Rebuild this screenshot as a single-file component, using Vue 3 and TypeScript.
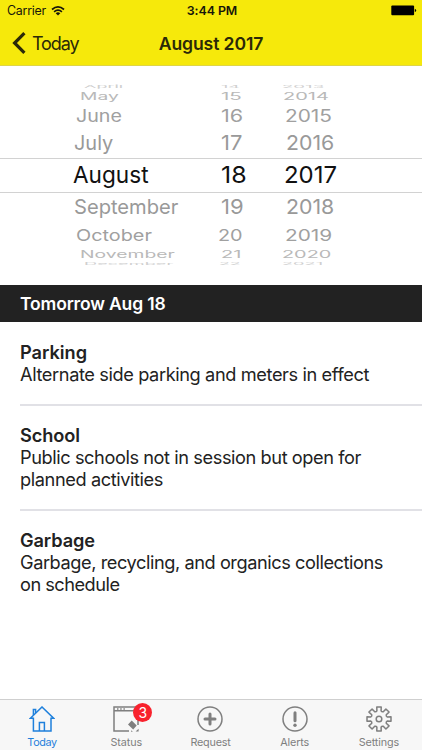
<script setup lang="ts">
interface WheelRow {
  height: number
  squash: number
  color: string
  month: [string, number, number]
  day: [string, number, number]
  year: [string, number, number]
}

interface Line {
  text: string
  width: number
}

interface Notice {
  name: Line
  lines: Line[]
}

// Each wheel cell is [label, left edge, drawn width].
const rows: WheelRow[] = [
  { height: 7, squash: 0.17, color: '#cfcfcf', month: ['April', 84, 39], day: ['14', 221, 19], year: ['2013', 282, 42] },
  { height: 13, squash: 0.43, color: '#b9b9b9', month: ['May', 79.5, 38.5], day: ['15', 220.5, 21], year: ['2014', 282.5, 46] },
  { height: 26, squash: 0.71, color: '#a0a0a0', month: ['June', 76, 46], day: ['16', 220.5, 22], year: ['2015', 284.5, 47] },
  { height: 28.5, squash: 0.86, color: '#999999', month: ['July', 74, 39], day: ['17', 221, 21.5], year: ['2016', 285.5, 48] },
  { height: 35.5, squash: 1, color: '#111111', month: ['August', 73, 76], day: ['18', 220.5, 25.5], year: ['2017', 284, 53] },
  { height: 28, squash: 0.86, color: '#999999', month: ['September', 74, 104.5], day: ['19', 220.5, 22.5], year: ['2018', 285.5, 48] },
  { height: 27, squash: 0.69, color: '#a0a0a0', month: ['October', 76, 76], day: ['20', 218, 24.5], year: ['2019', 284.5, 47] },
  { height: 12, squash: 0.44, color: '#b9b9b9', month: ['November', 79.5, 94.5], day: ['21', 221, 20.5], year: ['2020', 281.5, 49] },
  { height: 7, squash: 0.15, color: '#cfcfcf', month: ['December', 84, 89], day: ['22', 219, 22], year: ['2021', 281.5, 41] },
]

const notices: Notice[] = [
  { name: { text: 'Parking', width: 67 }, lines: [{ text: 'Alternate side parking and meters in effect', width: 349 }] },
  {
    name: { text: 'School', width: 60 },
    lines: [
      { text: 'Public schools not in session but open for', width: 341 },
      { text: 'planned activities', width: 143 },
    ],
  },
  {
    name: { text: 'Garbage', width: 75 },
    lines: [
      { text: 'Garbage, recycling, and organics collections', width: 363 },
      { text: 'on schedule', width: 99.5 },
    ],
  },
]

const tabs = [
  { id: 'today', label: 'Today', width: 29.5 },
  { id: 'status', label: 'Status', width: 31.5 },
  { id: 'request', label: 'Request', width: 40 },
  { id: 'alerts', label: 'Alerts', width: 29 },
  { id: 'settings', label: 'Settings', width: 40.5 },
]

// Tracks a label so that it spans the given number of pixels.
const vTrack = {
  mounted(el: HTMLElement, binding: { value: number }) {
    const count = (el.textContent ?? '').length
    const natural = el.getBoundingClientRect().width
    el.style.letterSpacing = `${(binding.value - natural) / count}px`
  },
}

// Projects a wheel cell to [drawn width, vertical squash].
const vProject = {
  mounted(el: HTMLElement, binding: { value: [number, number] }) {
    const [width, squash] = binding.value
    el.style.transform = `scale(${width / el.offsetWidth}, ${squash})`
  },
}

const teeth = Array.from({ length: 8 }, (_, i) => i * 45)
const gear = teeth
  .map((deg, i) => {
    const at = (r: number, offset: number) => {
      const a = ((deg + offset - 90) * Math.PI) / 180
      return `${(13 + r * Math.cos(a)).toFixed(2)} ${(13 + r * Math.sin(a)).toFixed(2)}`
    }
    return `${i ? 'L' : 'M'}${at(8.4, -14.5)} L${at(12.2, -10.5)} L${at(12.2, 10.5)} L${at(8.4, 14.5)} Q${at(7.4, 22.5)} ${at(8.4, 30.5)}`
  })
  .join(' ') + 'Z'
</script>

<template>
  <main class="screen">
    <header class="top">
      <div class="statusbar">
        <div class="carrier">
          <span v-track="39">Carrier</span>
          <svg class="wifi" viewBox="0 0 14 10" width="14" height="10">
            <path d="M1 3.5Q7-1.6 13 3.5M3.1 5.8Q7 2.5 10.9 5.8" />
            <path class="dot" d="M7 9.5 4.7 7.2Q7 5.3 9.3 7.2Z" />
          </svg>
        </div>
        <span class="clock"><span v-track="50.5">3:44 PM</span></span>
        <svg class="battery" viewBox="0 0 26 11" width="26" height="11">
          <rect x=".3" y=".6" width="22.8" height="9.6" rx="1" />
          <path d="M23.8 3.7q1.4.5 1.4 1.7t-1.4 1.7Z" />
        </svg>
      </div>
      <nav class="navbar">
        <a class="back">
          <svg viewBox="0 0 14 22" width="14" height="22"><path d="M12.4 1.2 2.6 11l9.8 9.8" /></svg>
          <span v-track="46.5">Today</span>
        </a>
        <h1><span v-track="104.5">August 2017</span></h1>
        <span></span>
      </nav>
    </header>

    <section class="picker">
      <div
        v-for="row in rows"
        :key="row.month[0]"
        class="row"
        :class="{ selected: row.squash === 1 }"
        :style="{ height: row.height + 'px', color: row.color }"
      >
        <div v-for="cell in [row.month, row.day, row.year]" :key="cell[0]" class="cell" :style="{ marginLeft: cell[1] + 'px' }">
          <span v-project="[cell[2], row.squash]">{{ cell[0] }}</span>
        </div>
      </div>
    </section>

    <h2 class="dayhead"><span v-track="145.5">Tomorrow Aug 18</span></h2>

    <section class="notices">
      <article v-for="notice in notices" :key="notice.name.text">
        <h3><span v-track="notice.name.width">{{ notice.name.text }}</span></h3>
        <p v-for="line in notice.lines" :key="line.text"><span v-track="line.width">{{ line.text }}</span></p>
      </article>
    </section>

    <footer class="tabs">
      <a v-for="tab in tabs" :key="tab.id" :class="{ active: tab.id === 'today' }">
        <span class="icon">
          <svg viewBox="0 0 26 26" width="26" height="26">
            <g v-if="tab.id === 'today'">
              <path d="M1.4 12.3 13 1l11.6 11.3H22V25H4.4V12.3Z" />
              <path d="M10.4 25v-8.5h5V25M4.4 9V3.5h2.2V7" />
            </g>
            <g v-else-if="tab.id === 'status'">
              <path d="M16 25H1V1h24v18M1 4.8h24M4 2.9h1.5M7.2 2.9h1.5M10.4 2.9h1.5" />
              <path class="fill" d="m18.7 14.6 5 4.8-3.5 4-5.2-4.9ZM25.6 22.8v2.8h-3ZM18.4 24.2l1.4 1.6h-1.8Z" />
            </g>
            <g v-else-if="tab.id === 'request'">
              <circle cx="13" cy="13" r="12" />
              <path class="bold" d="M13 8v10M8 13h10" />
            </g>
            <g v-else-if="tab.id === 'alerts'">
              <circle cx="13" cy="13" r="12" />
              <path class="bold" d="M13 6.8v8" />
              <circle class="fill" cx="13" cy="19.2" r="1.7" />
            </g>
            <g v-else>
              <path :d="gear" stroke-linejoin="round" />
              <circle cx="13" cy="13" r="2.8" />
            </g>
          </svg>
          <b v-if="tab.id === 'status'" class="badge">3</b>
        </span>
        <span v-track="tab.width" class="label">{{ tab.label }}</span>
      </a>
    </footer>
  </main>
</template>

<style>
body {
  margin: 0;
}
</style>

<style scoped>
.screen {
  display: flex;
  flex-direction: column;
  width: 422px;
  height: 750px;
  overflow: hidden;
  background: #fff;
  color: #222;
  font-family: Inter, 'Liberation Sans', sans-serif;
}

.screen span {
  white-space: nowrap;
}

svg {
  display: block;
  fill: none;
  stroke: currentColor;
}

h1,
h2,
h3,
p {
  margin: 0;
}

.top {
  box-sizing: border-box;
  height: 66px;
  background: #f6e90b;
  border-bottom: 1px solid #ded548;
}

.statusbar {
  display: grid;
  grid-template-columns: 1fr auto 1fr;
  align-items: center;
  box-sizing: border-box;
  height: 21px;
  padding: 0 5px 0 7px;
  font-size: 12.4px;
  color: #16160a;
}

.carrier {
  display: flex;
  align-items: center;
  gap: 5px;
}

.wifi {
  stroke-width: 1.7;
}

.wifi .dot,
.battery {
  fill: currentColor;
  stroke: none;
}

.clock {
  font-weight: 600;
}

.battery {
  justify-self: end;
  color: #000;
}

.navbar {
  display: grid;
  grid-template-columns: 1fr auto 1fr;
  align-items: center;
  height: 44px;
  padding: 0 12px;
  color: #2b2908;
}

.back {
  display: flex;
  align-items: center;
  gap: 6px;
  font-size: 18px;
}

.back svg {
  stroke-width: 3.2;
}

.navbar h1 {
  font-size: 17.6px;
  font-weight: 600;
}

.picker {
  box-sizing: border-box;
  height: 219px;
  padding-top: 17px;
  font-size: 23.5px;
}

.row {
  display: grid;
  grid-template-rows: 100%;
  box-sizing: border-box;
}

.row.selected {
  border-top: 1px solid #d2d2d2;
  border-bottom: 1px solid #d2d2d2;
}

.cell {
  display: flex;
  grid-area: 1 / 1;
  align-items: center;
  min-height: 0;
  line-height: 28px;
}

.cell span {
  transform-origin: 0 50%;
}

.dayhead {
  box-sizing: border-box;
  height: 37px;
  padding-left: 20px;
  font-size: 17.5px;
  font-weight: 600;
  line-height: 37px;
  color: #fff;
  background: #222;
}

.notices {
  flex: 1;
  padding-left: 20px;
}

.notices article {
  padding: 19px 0;
  border-bottom: 2px solid #e1e1e6;
}

.notices article + article {
  padding-top: 18px;
}

.notices article:last-child {
  border-bottom: 0;
}

.notices h3,
.notices p {
  font-size: 18.2px;
  font-weight: 400;
  line-height: 22px;
}

.notices h3 {
  font-weight: 600;
}

.tabs {
  display: grid;
  grid-template-columns: repeat(5, 1fr);
  box-sizing: border-box;
  height: 51px;
  padding-right: 1px;
  border-top: 1px solid #cfcfcf;
  background: #f7f7f7;
  color: #7f7f7f;
}

.tabs a {
  display: flex;
  flex-direction: column;
  align-items: center;
  padding-top: 6px;
}

.tabs .active {
  color: #1f80dc;
}

.icon {
  position: relative;
}

.icon svg {
  stroke-width: 1.5;
}

.icon .fill {
  fill: currentColor;
  stroke: none;
}

.icon .bold {
  stroke-width: 3;
  stroke-linecap: round;
}

.badge {
  position: absolute;
  top: -3px;
  right: -13px;
  width: 19px;
  height: 19px;
  border-radius: 50%;
  background: #f8222d;
  color: #fff;
  font-size: 14px;
  font-weight: 400;
  line-height: 19px;
  text-align: center;
}

.label {
  margin-top: 4px;
  font-size: 10.8px;
  line-height: 14px;
}
</style>
